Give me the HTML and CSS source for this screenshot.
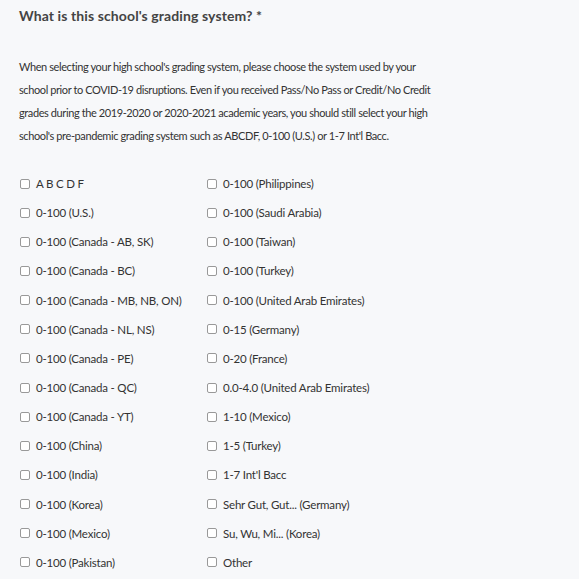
FILE: index.html
```html
<!DOCTYPE html>
<html>
<head>
<meta charset="utf-8">
<link rel="stylesheet" href="styles.css">
</head>
<body>
<div class="question">
  <h2 class="title">What is this school's grading system? *</h2>
  <p class="help">When selecting your high school's grading system, please choose the system used by your school prior to COVID-19 disruptions. Even if you received Pass/No Pass or Credit/No Credit grades during the 2019-2020 or 2020-2021 academic years, you should still select your high school's pre-pandemic grading system such as ABCDF, 0-100 (U.S.) or 1-7 Int'l Bacc.</p>
  <div class="options">
    <label class="opt"><input type="checkbox"><span>A B C D F</span></label>
    <label class="opt"><input type="checkbox"><span>0-100 (Philippines)</span></label>
    <label class="opt"><input type="checkbox"><span>0-100 (U.S.)</span></label>
    <label class="opt"><input type="checkbox"><span>0-100 (Saudi Arabia)</span></label>
    <label class="opt"><input type="checkbox"><span>0-100 (Canada - AB, SK)</span></label>
    <label class="opt"><input type="checkbox"><span>0-100 (Taiwan)</span></label>
    <label class="opt"><input type="checkbox"><span>0-100 (Canada - BC)</span></label>
    <label class="opt"><input type="checkbox"><span>0-100 (Turkey)</span></label>
    <label class="opt"><input type="checkbox"><span>0-100 (Canada - MB, NB, ON)</span></label>
    <label class="opt"><input type="checkbox"><span>0-100 (United Arab Emirates)</span></label>
    <label class="opt"><input type="checkbox"><span>0-100 (Canada - NL, NS)</span></label>
    <label class="opt"><input type="checkbox"><span>0-15 (Germany)</span></label>
    <label class="opt"><input type="checkbox"><span>0-100 (Canada - PE)</span></label>
    <label class="opt"><input type="checkbox"><span>0-20 (France)</span></label>
    <label class="opt"><input type="checkbox"><span>0-100 (Canada - QC)</span></label>
    <label class="opt"><input type="checkbox"><span>0.0-4.0 (United Arab Emirates)</span></label>
    <label class="opt"><input type="checkbox"><span>0-100 (Canada - YT)</span></label>
    <label class="opt"><input type="checkbox"><span>1-10 (Mexico)</span></label>
    <label class="opt"><input type="checkbox"><span>0-100 (China)</span></label>
    <label class="opt"><input type="checkbox"><span>1-5 (Turkey)</span></label>
    <label class="opt"><input type="checkbox"><span>0-100 (India)</span></label>
    <label class="opt"><input type="checkbox"><span>1-7 Int'l Bacc</span></label>
    <label class="opt"><input type="checkbox"><span>0-100 (Korea)</span></label>
    <label class="opt"><input type="checkbox"><span>Sehr Gut, Gut... (Germany)</span></label>
    <label class="opt"><input type="checkbox"><span>0-100 (Mexico)</span></label>
    <label class="opt"><input type="checkbox"><span>Su, Wu, Mi... (Korea)</span></label>
    <label class="opt"><input type="checkbox"><span>0-100 (Pakistan)</span></label>
    <label class="opt"><input type="checkbox"><span>Other</span></label>
  </div>
</div>
</body>
</html>
```
FILE: styles.css
```css
html, body {
  margin: 0;
  padding: 0;
  background: #f7f8fa;
}
body {
  font-family: Lato, "Liberation Sans", sans-serif;
  color: #333;
}
.question {
  padding: 6px 19px 0 19px;
}
.title {
  margin: 0;
  font-size: 14px;
  font-weight: 700;
  color: #444;
  line-height: 20px;
  letter-spacing: 0.1px;
}
.help {
  margin: 29px 0 0 0;
  max-width: 415px;
  font-size: 11px;
  letter-spacing: -0.4px;
  line-height: 23px;
  color: #333;
}
.options {
  display: grid;
  grid-template-columns: 187px 1fr;
  grid-auto-rows: 29.15px;
  margin-top: 22px;
}
.opt {
  display: flex;
  align-items: center;
  font-size: 11.5px;
  letter-spacing: -0.2px;
  color: #333;
}
.opt input {
  -webkit-appearance: none;
  appearance: none;
  width: 10px;
  height: 10px;
  margin: 0 6px 0 1px;
  border: 1px solid #999;
  border-radius: 2px;
  background: #fff;
  box-sizing: border-box;
  flex: none;
}
```
